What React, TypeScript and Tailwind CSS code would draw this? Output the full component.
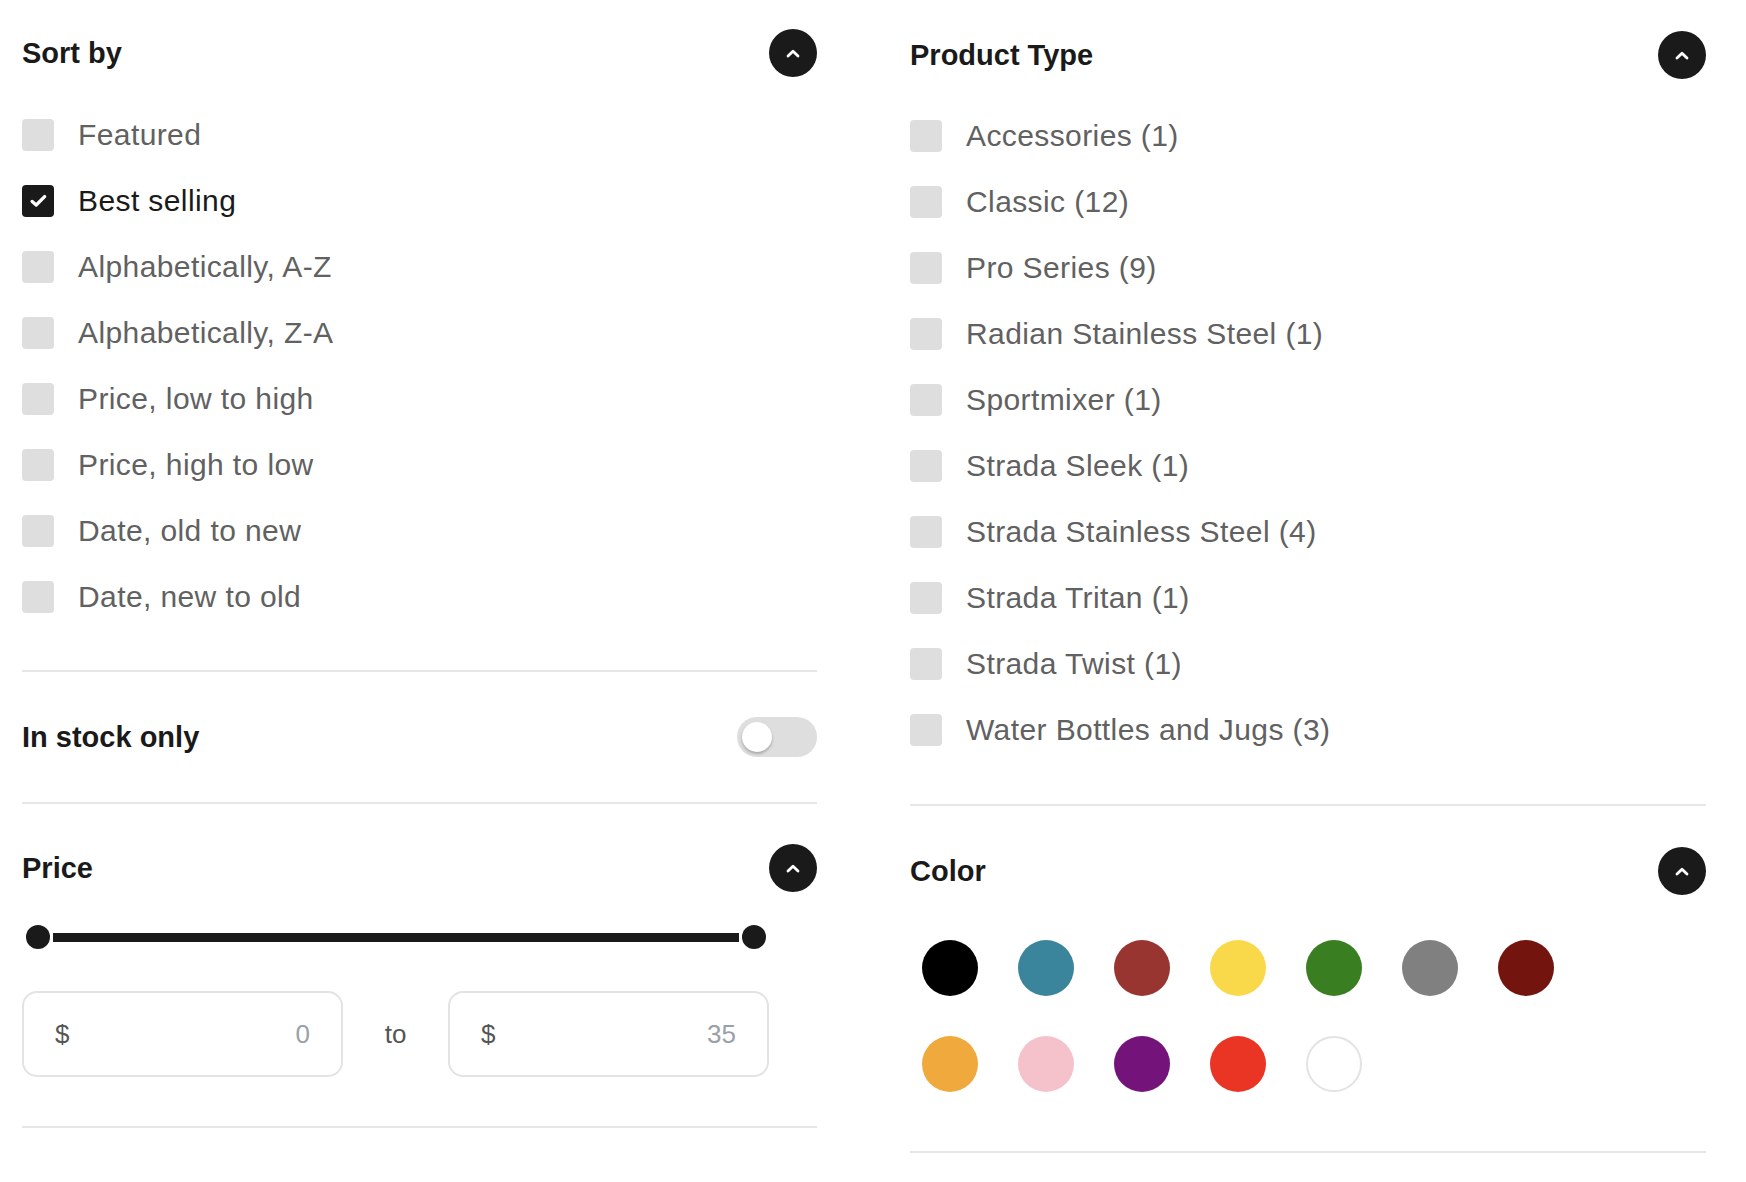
import React from "react";

const sortOptions = [
  "Featured",
  "Best selling",
  "Alphabetically, A-Z",
  "Alphabetically, Z-A",
  "Price, low to high",
  "Price, high to low",
  "Date, old to new",
  "Date, new to old",
];

const productTypes = [
  "Accessories (1)",
  "Classic (12)",
  "Pro Series (9)",
  "Radian Stainless Steel (1)",
  "Sportmixer (1)",
  "Strada Sleek (1)",
  "Strada Stainless Steel (4)",
  "Strada Tritan (1)",
  "Strada Twist (1)",
  "Water Bottles and Jugs (3)",
];

const colorsRow1 = ["bg-[#000000]", "bg-[#3a849c]", "bg-[#983531]", "bg-[#f9d94a]", "bg-[#3a7e22]", "bg-[#808080]", "bg-[#74140e]"];
const colorsRow2 = ["bg-[#f0a93c]", "bg-[#f5c2cc]", "bg-[#74147a]", "bg-[#ea3424]", "bg-white border-2 border-[#e3e3e3]"];

function ChevronButton() {
  return (
    <button className="w-12 h-12 rounded-full bg-[#1a1a1a] flex items-center justify-center shrink-0">
      <svg width="14" height="9" viewBox="0 0 14 9" fill="none">
        <path d="M2 7 L7 2.2 L12 7" stroke="white" strokeWidth="2.8" strokeLinecap="round" strokeLinejoin="round" />
      </svg>
    </button>
  );
}

function SectionHeader({ title }: { title: string }) {
  return (
    <div className="flex items-center justify-between h-12">
      <h2 className="text-[29px] font-bold text-[#1a1a1a] leading-none">{title}</h2>
      <ChevronButton />
    </div>
  );
}

function CheckRow({ label, checked }: { label: string; checked?: boolean }) {
  return (
    <label className="flex items-center h-8 gap-[24px]">
      {checked ? (
        <span className="w-8 h-8 rounded-[4px] bg-[#1a1a1a] flex items-center justify-center shrink-0">
          <svg width="17" height="14" viewBox="0 0 17 14" fill="none">
            <path d="M2.2 7.4 L6.2 11 L14.6 2.6" stroke="white" strokeWidth="3.3" strokeLinecap="round" strokeLinejoin="round" />
          </svg>
        </span>
      ) : (
        <span className="w-8 h-8 rounded-[4px] bg-[#dedede] shrink-0" />
      )}
      <span className={`text-[30px] tracking-[0.4px] leading-none ${checked ? "text-[#1a1a1a]" : "text-[#616161]"}`}>
        {label}
      </span>
    </label>
  );
}

function Divider() {
  return <div className="h-[2px] bg-[#e6e6e6]" />;
}

function PriceBox({ value }: { value: string }) {
  return (
    <div className="w-[321px] h-[86px] border-2 border-[#e3e3e3] rounded-[15px] px-[31px] flex items-center justify-between text-[26px]">
      <span className="text-[#555]">$</span>
      <span className="text-[#9aa0a8]">{value}</span>
    </div>
  );
}

export default function App() {
  return (
    <div className="w-[1746px] h-[1182px] bg-white font-['Liberation_Sans',Arial,sans-serif] grid grid-cols-[795px_796px] gap-x-[93px] pl-[22px] pr-[40px]">
      {/* left column */}
      <div className="flex flex-col pt-[29px]">
        <SectionHeader title="Sort by" />
        <div className="flex flex-col gap-[34px] mt-[42px]">
          {sortOptions.map((o) => (
            <CheckRow key={o} label={o} checked={o === "Best selling"} />
          ))}
        </div>
        <div className="mt-[57px]">
          <Divider />
        </div>

        <div className="flex items-center justify-between h-10 my-[45px]">
          <h2 className="text-[29px] font-bold text-[#1a1a1a] leading-none">In stock only</h2>
          <div className="w-20 h-10 rounded-full bg-[#dedede] flex items-center px-[5px]">
            <span className="w-[30px] h-[30px] rounded-full bg-white shadow-[0_2px_3px_rgba(0,0,0,0.25)]" />
          </div>
        </div>
        <Divider />

        <div className="mt-[40px]">
          <SectionHeader title="Price" />
        </div>
        <div className="mt-[33px] w-[744px] h-6 flex items-center gap-[3px] pl-[4px]">
          <span className="w-6 h-6 rounded-full bg-[#1a1a1a] shrink-0" />
          <span className="flex-1 h-[9px] bg-[#1a1a1a]" />
          <span className="w-6 h-6 rounded-full bg-[#1a1a1a] shrink-0" />
        </div>
        <div className="mt-[42px] flex items-center">
          <PriceBox value="0" />
          <span className="w-[105px] text-center text-[26px] text-[#555]">to</span>
          <PriceBox value="35" />
        </div>
        <div className="mt-[49px]">
          <Divider />
        </div>
      </div>

      {/* right column */}
      <div className="flex flex-col pt-[31px]">
        <SectionHeader title="Product Type" />
        <div className="flex flex-col gap-[34px] mt-[41px]">
          {productTypes.map((o) => (
            <CheckRow key={o} label={o} />
          ))}
        </div>
        <div className="mt-[58px]">
          <Divider />
        </div>

        <div className="mt-[41px]">
          <SectionHeader title="Color" />
        </div>
        <div className="mt-[45px] pl-[12px] flex flex-col gap-10">
          <div className="flex gap-10">
            {colorsRow1.map((c) => (
              <span key={c} className={`w-14 h-14 rounded-full ${c}`} />
            ))}
          </div>
          <div className="flex gap-10">
            {colorsRow2.map((c) => (
              <span key={c} className={`w-14 h-14 rounded-full ${c}`} />
            ))}
          </div>
        </div>
        <div className="mt-[59px]">
          <Divider />
        </div>
      </div>
    </div>
  );
}
